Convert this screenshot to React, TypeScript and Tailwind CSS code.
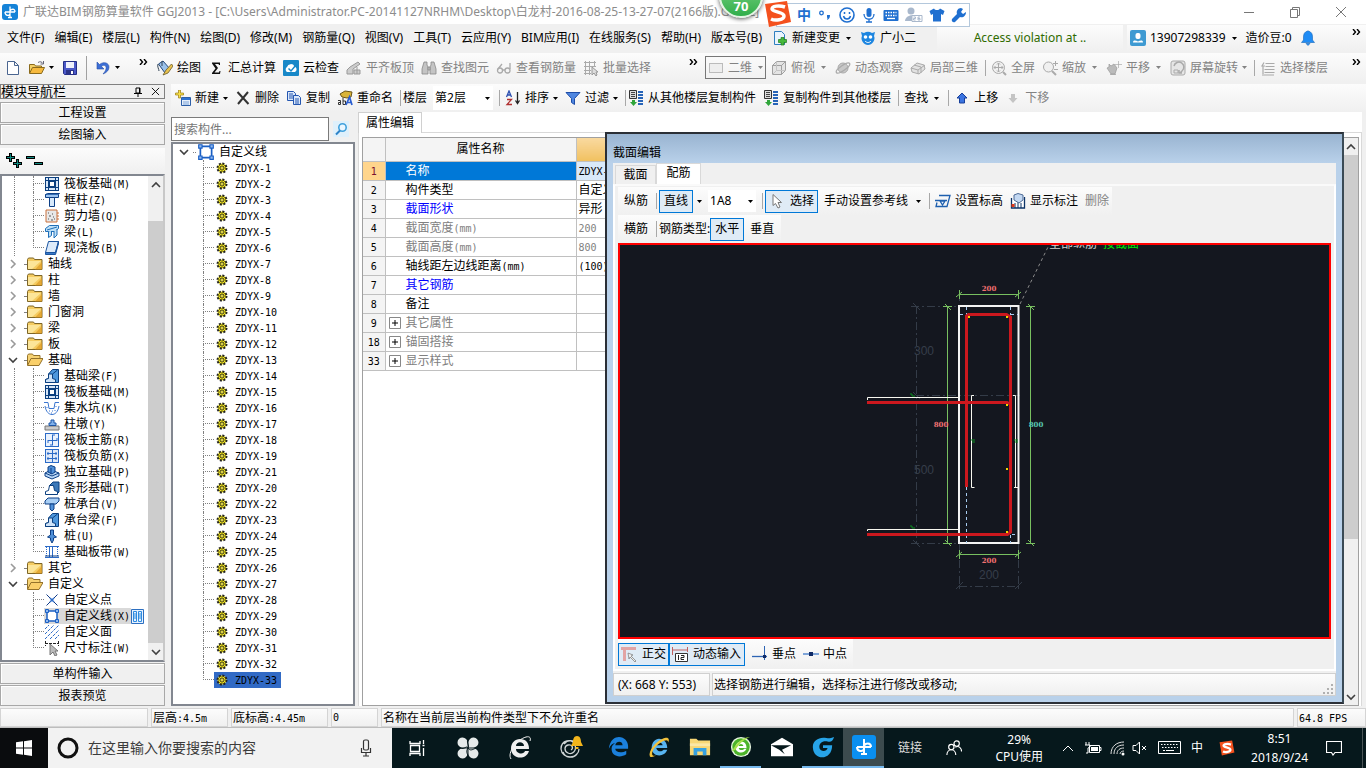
import React from "react";

const UI = "font-['Noto_Sans','Noto_Sans_CJK_SC',sans-serif]";

/* ---------- icons ---------- */

const raft = (
  <g fill="none" stroke="#0b3f7f">
    <rect x="1.5" y="1.5" width="13" height="13" fill="#d7e6f7" />
    <rect x="5.5" y="5.5" width="5" height="5" fill="#fff" />
    <path d="M1 4.5h14M1 11.5h14M4.5 1v14M11.5 1v14" />
  </g>
);
const found = (
  <g stroke="#0b3f7f">
    <path d="M1.5 14.5v-3l3-1V6l4-4.500h6v13z" fill="#4e97dc" />
    <path d="M1.500 14.500v-3l3-1V6h4v4.500l3 1v3z" fill="#cfe3f8" />
    <path d="M8.500 6l5-4" fill="none" />
  </g>
);
const section = (
  <g fill="#fff" stroke="#1a5fc4">
    <path d="M3 3h10v10H3z" strokeWidth="1.500" />
    <path d="M1.500 1.500h3v3h-3zM11.500 1.500h3v3h-3zM1.500 11.500h3v3h-3zM11.500 11.500h3v3h-3z" fill="#8fb8f0" />
  </g>
);

const ICONS: Record<string, React.ReactNode> = {
  raft,
  found,
  section,
  column: (
    <g stroke="#0d3f86">
      <path d="M1.500 2.500h13v3h-13z" fill="#9cc4f0" />
      <path d="M5.500 5.500h5v9h-5z" fill="#d7e9fb" />
      <path d="M1.500 2.500l2-1h12l-1 1" fill="#5c9be0" />
    </g>
  ),
  wall: (
    <g>
      <path d="M2 2h11v12H2z" fill="#e8e8e8" stroke="#c9713c" />
      <path d="M13 5h2M13 8h2M13 11h2" stroke="#c9713c" />
      <path d="M4 5h1M8 6h1M5 8h2M9 9h1M4 11h1M7 12h2M10 11h1" stroke="#555" />
    </g>
  ),
  beam: (
    <g stroke="#1f6fb8" fill="#bfe0f7">
      <path d="M1.500 4.500l4-3h9v3l-4 3h-9z" />
      <path d="M4.500 7.500v6l3-2V7M10 7v7l3-3V5" />
      <path d="M3 6l10-3" />
    </g>
  ),
  slab: (
    <g stroke="#1c55a0">
      <path d="M4.500 1.500h10l-3 11h-10z" fill="#dceafa" />
      <path d="M1.500 12.500v2h10l3-11v-2l-3 11z" fill="#3878c7" />
    </g>
  ),
  pit: (
    <g fill="none" stroke="#3c77d0">
      <path d="M0 2.500h4l1 6h5l1-6h4" />
      <path d="M1 6c1 6 4 8.500 7 8.500S14 12 15 6" />
      <path d="M3 7v1M5 11h1M8 11h1M11 10v1M12 6v1M7 13h1" />
    </g>
  ),
  pier: (
    <g>
      <path d="M1 10h14v4H1z" fill="#ccc" stroke="#777" />
      <path d="M5 9.500V7h2V4h3v3h2v2.500z" fill="#7fb0ea" stroke="#1d55a5" />
    </g>
  ),
  rebar1: (
    <g fill="none" stroke="#2c6bc7">
      <rect x="1.500" y="1.500" width="13" height="13" fill="#eaf2fd" />
      <path d="M8.500 3v10M4 8.500h9M4 8v3M13 6v3M6 13h3M8 3h3" />
    </g>
  ),
  rebar2: (
    <g fill="none" stroke="#2c6bc7">
      <rect x="1.500" y="1.500" width="13" height="13" fill="#dfe9f8" />
      <path d="M8.500 2v12M3 5.500h10M3 10.500h10M4 4v3M12 4v3M4 9v3M12 9v3" />
    </g>
  ),
  isolated: (
    <g stroke="#0d3f86">
      <path d="M1 9l6-3 8 3v3l-7 3-7-3z" fill="#b9d7f6" />
      <path d="M4 8V3l3-1.500 4 1.500v5l-3 2z" fill="#4e8fd8" />
      <path d="M7 10V4M1 9l7 3 7-3" fill="none" />
    </g>
  ),
  strip: (
    <g stroke="#0b3f7f">
      <path d="M5 6l4-4h6v10l-2 2z" fill="#3b78b8" />
      <path d="M1.500 14.500v-3l3-1 1-5h4l1 5 3 1v3z" fill="#fff" />
    </g>
  ),
  cap: (
    <g stroke="#0d3f86">
      <path d="M1 5l3-3h11v3l-3 3H1z" fill="#a9cff5" />
      <path d="M6 8v5l2 2 2-2V8z" fill="#4f90da" />
    </g>
  ),
  pile: (
    <g fill="#4e8fd8" stroke="#0d3f86">
      <path d="M6.500 2h3v5l3 2-3 1v2l-1.500 3-1.500-3v-2l-3-1 3-2z" />
    </g>
  ),
  band: (
    <g fill="none" stroke="#2c6bc7">
      <path d="M1 2.500h14M1 13.500h14M8.500 3v10M5.500 3v10" />
      <path d="M2.500 3v10M13.500 3v10" strokeDasharray="1 1" />
      <path d="M1 12h14" stroke="#0d3f86" />
    </g>
  ),
  point: (
    <g stroke="#2c6bc7" fill="none">
      <path d="M2.500 2.500l4 4M13.500 2.500l-4 4M2.500 13.500l4-4M13.500 13.500l-4-4" stroke="#123c88" />
      <path d="M6 6l4 4M10 6l-4 4" strokeWidth="1.500" />
    </g>
  ),
  hatch: (
    <path d="M1 5l4-4M1 10l9-9M1 15L15 1M6 15l9-9M11 15l4-4" stroke="#2c6bc7" strokeDasharray="3 1" />
  ),
  dim: (
    <g>
      <path d="M1.500 1v5M14.500 1v5M1 3.500h14" stroke="#222" strokeDasharray="3 1" fill="none" />
      <path d="M6 4v11l3-3 2 4 2-1-2-4h3z" fill="#bbb" stroke="#777" />
    </g>
  ),
  gear: (
    <g>
      <circle cx="8" cy="8" r="4.500" fill="#f0e42c" stroke="#222" strokeDasharray="2 1.500" strokeWidth="2" />
      <path d="M8 4v8M4 8h8M5.200 5.200l5.600 5.600M10.800 5.200l-5.600 5.600" stroke="#6b6400" />
      <circle cx="8" cy="8" r="1.500" fill="#fff34a" stroke="#333" strokeWidth=".6" />
    </g>
  ),
  folder: (
    <g>
      <path d="M.5 3.500l1-1.500h5l1 1.500h7.500v10H.5z" fill="#f5cc62" stroke="#7d6527" />
      <path d="M1 5h13L5 13H1z" fill="#fff0b0" opacity=".7" />
      <path d="M15 6v7.500H8z" fill="#dd9a22" opacity=".7" />
    </g>
  ),
  folderOpen: (
    <g stroke="#94722a">
      <path d="M.5 13V3.500l1-1.500h4l1 1.500h6.500V6" fill="#f6d273" />
      <path d="M.5 13.500l3.500-7h12l-4 7z" fill="#f9cf6a" />
    </g>
  ),
  newDoc: (
    <path d="M2.500 1.500h7l4 4v9h-11zM9.500 1.500v4h4" fill="#fff" stroke="#4a6590" />
  ),
  open: (
    <g stroke="#8a6a1c">
      <path d="M.5 13V4.500h5l1 1.500h6v2" fill="#f2cf66" />
      <path d="M.5 13.500l3-6h12l-3 6z" fill="#f6b93e" />
      <path d="M9 2.500c2-1.500 4-.5 5 1M14.500 1v3h-3" stroke="#667" fill="none" />
    </g>
  ),
  save: (
    <g>
      <path d="M1.500 1.500h13v13h-12l-1-1z" fill="#4a58c8" stroke="#242e86" />
      <path d="M4 2h8v6H4z" fill="#eef0fb" />
      <path d="M4 10h8v4H4z" fill="#2b3487" />
      <path d="M9 11h2v3H9z" fill="#fff" />
    </g>
  ),
  undo: (
    <path d="M2 2v7h7L6.500 6.500C9 4 12 6 11 9c-.5 2-2 4-3 5 4-1.500 6-4 6-7 0-4-5-6-9.500-2.500z" fill="#3d6fd6" stroke="#274fa8" strokeWidth=".6" />
  ),
  paint: (
    <g>
      <path d="M1.500 4L6 1l7 8-5 4z" fill="#9cc2ea" stroke="#24477a" />
      <path d="M1 4c-1 3 1 5 1 7M5 6V1" stroke="#345" fill="none" />
      <path d="M14.500 4L9 10l-3 5 5-2 5-7z" fill="#e8c24e" stroke="#6a5a2a" strokeWidth=".8" />
    </g>
  ),
  sigma: <path d="M4 2.500h8V5h-1L10.500 4H7l3 4-3.500 4.500H11l.5-1.500h1l-.5 3H4v-1l3.500-4.500L4 3.500z" fill="#111" />,
  cloud: (
    <g>
      <rect width="16" height="16" rx="1" fill="#1888c8" />
      <path d="M4 12a3 3 0 010-5 4 4 0 017.500-.5A3 3 0 0112 12z" fill="#fff" />
      <path d="M5.500 8.500L8 11l5-6" fill="none" stroke="#1888c8" strokeWidth="1.500" />
    </g>
  ),
  align: (
    <g fill="#ccc" stroke="#999">
      <path d="M1 10l3-3 8-5 2 2-7 5v5H1z" />
      <path d="M8 10h6v4H8zM11 7v7" />
    </g>
  ),
  bino: (
    <g fill="#c4c4c4" stroke="#888" strokeWidth=".8">
      <path d="M3 2h3v3l1 2v7H1V9zM13 2h-3v3L9 7v7h6V9z" />
      <path d="M7 7h2v3H7z" />
    </g>
  ),
  glasses: (
    <g fill="none" stroke="#aaa" strokeWidth="1.300">
      <circle cx="4" cy="10.500" r="2.500" />
      <circle cx="11.500" cy="10.500" r="2.500" />
      <path d="M6.500 10h2.500M2 9l4-5M14 9V3" />
    </g>
  ),
  grid: (
    <g fill="none" stroke="#aaa">
      <path d="M1 2.500h12M1 6.500h12M1 10.500h7M1 13.500h7M2.500 1v14M6.500 1v14M11.500 1v6" />
      <path d="M9 7v8l2-2 2 3 1-1-1-3h2z" fill="#ddd" stroke="#999" />
    </g>
  ),
  rect2d: <rect x="1.500" y="3.500" width="13" height="9" fill="#eee" stroke="#bbb" />,
  cube: (
    <g fill="#e4e4e4" stroke="#a0a0a0">
      <path d="M1.500 5.500h9v9h-9zM1.500 5.500l4-4h9l-4 4zM10.500 14.500l4-4v-9l-4 4z" />
      <path d="M5.500 1.500v9h9M5.500 10.500l-4 4" fill="none" stroke="#c4c4c4" />
    </g>
  ),
  orbit: (
    <g stroke="#aaa" fill="#c8c8c8">
      <circle cx="8" cy="8" r="5" />
      <ellipse cx="8" cy="8" rx="8" ry="2.500" transform="rotate(-35 8 8)" fill="none" strokeWidth="1.300" />
    </g>
  ),
  part3d: (
    <g fill="#e2e2e2" stroke="#aaa">
      <path d="M1 8l6-5 7 2 1 4-6 5-7-2z" />
      <path d="M1 8l7 2 7-5M8 10v4M4 5l7 2v6" fill="none" />
    </g>
  ),
  full: (
    <g fill="none" stroke="#aaa">
      <circle cx="7.500" cy="7.500" r="6" fill="#f0f0f0" />
      <path d="M7.500 3v9M3 7.500h9M6 4.500L7.500 3 9 4.500M6 10.500L7.500 12 9 10.500M4.500 6L3 7.500 4.500 9M10.500 6L12 7.500 10.500 9" />
      <path d="M12 12l3 3" strokeWidth="2" />
    </g>
  ),
  zoom: (
    <g fill="none" stroke="#aaa">
      <circle cx="6.500" cy="7" r="5" fill="#f0f0f0" />
      <path d="M10 11l4 4" strokeWidth="2" />
      <path d="M13.500 1v5M11 3.500h5M12 9.500h4" />
    </g>
  ),
  hand: (
    <g fill="#bbb" stroke="#999" strokeWidth=".7">
      <path d="M1 8l2-1V4l2 2 3-2 3 4-2 6H5z" />
      <path d="M12.500 1v7M9 4.500h7" fill="none" stroke="#aaa" />
      <path d="M4 14.500h6" />
    </g>
  ),
  rotate: (
    <g fill="none" stroke="#aaa">
      <rect x="1" y="1" width="14" height="14" rx="2" fill="#e6e6e6" />
      <path d="M4 6a5 5 0 118 5l-2 2M12 13H9v-3" strokeWidth="1.500" />
      <path d="M4 10h4v3H4z" />
    </g>
  ),
  layers: <path d="M4 2.500L2 6h3M5.500 3.500h9M5.500 6.500h9M4.500 9.500h10M4.500 12.500h10M2 15h12M3 6v8" stroke="#aaa" fill="none" strokeWidth="1.200" />,
  addItem: (
    <g>
      <path d="M6.500 7.500h9v8h-9z" fill="#e8f0fb" stroke="#2d5fa8" />
      <path d="M7 8h8v2H7z" fill="#2d72d2" />
      <path d="M8 12h6M8 14h6" stroke="#7ca4d8" />
      <path d="M3.500 0h2v3h3v2h-3v3h-2V5h-3V3h3z" fill="#f8e04a" stroke="#9a7b10" strokeWidth=".7" />
    </g>
  ),
  cross: <path d="M2.500 2l11 12M13 2L3 14" stroke="#333" strokeWidth="2" fill="none" />,
  copy: (
    <g stroke="#2456b0" fill="#dbe8fb">
      <path d="M1.500 1.500h6l2 2v7h-8zM3 4h4M3 6h5M3 8h5" />
      <path d="M7.500 5.500h5l2 2v7h-7zM9 9h4M9 11h4M9 13h4" />
    </g>
  ),
  rename: (
    <g>
      <path d="M3 4l5-3 7 1-1 5-4 1-5-1z" fill="#d9b43a" stroke="#6b5518" />
      <path d="M1 10.500h2.500v4H1.500v-2H4M6 8v6.500h2.500v-3.500H6" stroke="#333" fill="none" />
      <path d="M9 15l3.500-8L15 15M10 12.500h4" stroke="#2b5ed0" strokeWidth="1.700" fill="none" />
    </g>
  ),
  sort: (
    <g fill="none" strokeWidth="1.300">
      <path d="M1.500 7l2.500-6 2.500 6M2 5h4" stroke="#2b4fb0" />
      <path d="M2 9.500h4.500L2 14.500h5" stroke="#b03030" />
      <path d="M12.500 2v11M10.500 10.500l2 3 2-3" stroke="#222" />
    </g>
  ),
  filter: <path d="M1 2.500h14l-5.500 6v6l-3-2v-4z" fill="#4f86e0" stroke="#1e4da8" />,
  floorCopy: (
    <g>
      <path d="M1.500.5h7v8h-7z" fill="#ddd" stroke="#333" />
      <path d="M3 2.500h4M3 4.500h4M3 6.500h4" stroke="#444" />
      <path d="M10 2h5M10 5h5M10 8h5M10 11h5M10 14h5" stroke="#2764b8" strokeWidth="2" />
      <path d="M4 10h3v2h2l-3.500 4L2 12h2z" fill="#2fa53a" />
    </g>
  ),
  up: <path d="M8 3l5 5h-2.500v5h-5V8H3z" fill="#3b74e0" stroke="#173f9a" />,
  down: <path d="M8 13l4.500-5H10V4H6v4H3.500z" fill="#c4c4c4" />,
  change: (
    <g>
      <path d="M2.500 1.500h7l3 3v10h-10z" fill="#eaf4fd" stroke="#2f7fc0" />
      <path d="M9 7.500h3v2h2.500v3H12V15H9v-2.500H6.500v-3H9z" fill="#46b83a" stroke="#1e7a1c" strokeWidth=".7" />
    </g>
  ),
  owl: (
    <g>
      <path d="M1 2l3 1a8 8 0 018 0l3-1-1 4c2 4-2 9-6 9S0 10 2 6z" fill="#1e86e0" />
      <circle cx="5.500" cy="7" r="1.800" fill="#fff" />
      <circle cx="10.500" cy="7" r="1.800" fill="#fff" />
      <path d="M5 11c2 2 4 2 6 0" stroke="#fff" fill="none" />
    </g>
  ),
  user: (
    <g>
      <rect width="16" height="16" rx="2" fill="#3e9ad2" />
      <rect x="5.500" y="3" width="5" height="6" rx="2" fill="#fff" />
      <path d="M3 12.500c0-3 3-2 5-1 2-1 5-2 5 1z" fill="#fff" />
    </g>
  ),
  bell: <path d="M7.500 1h1c3 1 4 3 4 6v3l2 2.500h-13l2-2.500V7c0-3 1-5 4-6zM6 13.500h4L8 15.500z" fill="#1f8cf5" stroke="#1464b8" strokeWidth=".6" />,
  elev: (
    <g fill="#e6f1fc" stroke="#1e5fae" strokeWidth="1.300">
      <path d="M4 2.500h11l-3 11H1l1-4" fill="none" />
      <path d="M0 7.500h12M5 8l2.500 4L10 8z" />
    </g>
  ),
  showDim: (
    <g>
      <path d="M1.500 5v10h13V4" fill="#fff" stroke="#0d3468" strokeWidth="1.300" />
      <path d="M5 15v-5M8 15V8M11 15v-5" stroke="#0d3468" />
      <path d="M4 2l4-1.500L13 2v5l-4 3-5-3z" fill="#c3d8f2" stroke="#4c6a96" />
      <path d="M1.500 11h3v3h-3z" fill="#e03a1a" />
    </g>
  ),
  cursor: <path d="M4 1.500v11l2.500-2 2.500 4.500 2-1-2-4.500h3.500z" fill="#fff" stroke="#777" />,
  ortho: (
    <g>
      <path d="M0 1h15v3H5v11H2V4H0z" fill="#e2a4a4" />
      <path d="M7 7l5 2-2 1 5 5-1 1-5-5-1 2z" fill="#eee" stroke="#777" strokeWidth=".7" />
    </g>
  ),
  dyn: (
    <g>
      <path d="M.5 1v8M15.500 1v5M0 4h16" stroke="#c06060" fill="none" />
      <path d="M3.500 7.500h12v8h-12z" fill="#fff" stroke="#333" />
      <path d="M6.500 9v5M9 9.500h3v2H9v2h3" stroke="#222" fill="none" />
    </g>
  ),
  perp: (
    <g>
      <path d="M0 10.500h15" stroke="#2d64b4" strokeWidth="1.300" />
      <path d="M12.500 0v14" stroke="#2d64b4" />
      <path d="M11 9h3v3h-3z" fill="#102a66" />
    </g>
  ),
  mid: (
    <g>
      <path d="M0 8h16" stroke="#3d78c8" strokeWidth="1.300" />
      <path d="M6 6h4v4H6z" fill="#102a66" />
    </g>
  ),
};

function Icon({ n, big }: { n: string; big?: boolean }) {
  return (
    <svg viewBox="0 0 16 16" className={big ? "h-[18px] w-[18px] shrink-0" : "h-4 w-4 shrink-0"} aria-hidden="true">
      {ICONS[n]}
    </svg>
  );
}

function Caret() {
  return (
    <svg viewBox="0 0 5 3" className="h-[3px] w-[5px] shrink-0" aria-hidden="true">
      <path d="M0 0h5L2.500 3z" fill="currentColor" />
    </svg>
  );
}

function More() {
  return (
    <svg viewBox="0 0 8 6" className="h-[6px] w-[9px] shrink-0" aria-hidden="true">
      <path d="M.5 0L3 3 .5 6M4.500 0L7 3 4.500 6" stroke="#000" strokeWidth="1.400" fill="none" />
    </svg>
  );
}

type TbProps = { icon?: string; label?: string; caret?: "near" | "wide"; off?: boolean };
function Tb({ icon, label, caret, off }: TbProps) {
  return (
    <button
      aria-label={label ? undefined : icon}
      className={"mr-[7px] flex h-full shrink-0 items-center gap-1 whitespace-nowrap " + (off ? "text-[#838383]" : "text-black")}
    >
      {icon && <Icon n={icon} />}
      {label}
      {caret && (
        <span className={caret === "wide" ? "flex w-[9px] justify-center" : "flex w-[5px] justify-center"}>
          <Caret />
        </span>
      )}
    </button>
  );
}

function Sep({ tight }: { tight?: boolean }) {
  return <span className={"h-4 w-px shrink-0 bg-[#a8a8a8] " + (tight ? "mr-[2px]" : "mr-[5px]")} />;
}

/* Bitmap-style labels: half-width Latin beside full-width Chinese glyphs. */
function Cell({ t }: { t: string }) {
  return (
    <>
      {t.split(/([\x20-\x7e]+)/).map((s, i) =>
        i % 2 ? (
          <span key={i} className="font-['DejaVu_Sans_Mono',monospace] text-[10px]">
            {s}
          </span>
        ) : (
          s
        ),
      )}
    </>
  );
}

/* ---------- header ---------- */

const MENUS = ["文件(F)", "编辑(E)", "楼层(L)", "构件(N)", "绘图(D)", "修改(M)", "钢筋量(Q)", "视图(V)", "工具(T)", "云应用(Y)", "BIM应用(I)", "在线服务(S)", "帮助(H)", "版本号(B)"];
const STRIP = "bg-linear-to-b from-[#fcfcfc] to-[#f0f0f0]";

function TitleBar() {
  return (
    <header className="flex h-6 shrink-0 items-center bg-white">
      <svg viewBox="0 0 16 16" className="ml-[2px] h-4 w-4 shrink-0">
        <rect width="16" height="16" rx="3" fill="#1583d8" />
        <path d="M8 2.500v11M3 8h10M3 8c0 4 4 4 5 2M13 8c0-4-4-3-5-1M6 13.500h4" stroke="#fff" fill="none" strokeWidth="1.300" />
      </svg>
      <h1 className="ml-[5px] whitespace-nowrap text-[#8c8c8c]">
        广联达BIM钢筋算量软件 GGJ2013 - [C:\Users\Administrator.PC-20141127NRHM\Desktop\白龙村-2016-08-25-13-27-07(2166版).GGJ12]
      </h1>
      <div className="mr-[19px] ml-auto flex items-center gap-[34px] text-[#777]">
        <button aria-label="最小化"><svg viewBox="0 0 12 12" className="h-3 w-3"><path d="M1 6.500h10" stroke="currentColor" /></svg></button>
        <button aria-label="还原"><svg viewBox="0 0 12 12" className="h-3 w-3"><path d="M1.500 3.500h7v8h-7zM3.500 3.500v-2h7v8h-2" stroke="currentColor" fill="none" /></svg></button>
        <button aria-label="关闭"><svg viewBox="0 0 12 12" className="h-3 w-3"><path d="M1 1l10 10M11 1L1 11" stroke="currentColor" /></svg></button>
      </div>
    </header>
  );
}

function MenuBar() {
  return (
    <div className="flex h-7 shrink-0 items-center">
      <nav className="flex h-full w-[937px] shrink-0 items-center gap-[10px] pl-[7px]">
        {MENUS.map((m) => (
          <button key={m} className="whitespace-nowrap">{m}</button>
        ))}
        <div className="flex h-full items-center">
          <Tb icon="change" label="新建变更" caret="wide" />
          <Tb icon="owl" label="广小二" />
        </div>
      </nav>
      <div className={"mr-1 flex h-[26px] w-[186px] shrink-0 items-center justify-center text-[#2f6b00] " + STRIP}>
        <span>Access violation at ..</span>
      </div>
      <div className={"flex h-[26px] flex-1 items-center pl-[3px] " + STRIP}>
        <Tb icon="user" label="13907298339" caret="wide" />
        <span className="mr-2 whitespace-nowrap">造价豆:0</span>
        <Tb icon="bell" />
        <span className="mr-[5px] mb-3 ml-auto"><More /></span>
      </div>
    </div>
  );
}

function MainToolbar() {
  return (
    <div className="mt-px flex h-[29px] shrink-0 items-center">
      <div className={"flex h-full w-[153px] shrink-0 items-center gap-2 pl-[5px] " + STRIP}>
        <Icon n="newDoc" />
        <span className="flex items-center gap-1"><Icon n="open" /><Caret /></span>
        <Icon n="save" />
        <span className="h-6 w-px bg-[#a0a0a0]" />
        <span className="flex items-center gap-1"><Icon n="undo" /><Caret /></span>
        <span className="mr-[5px] mb-3 ml-auto"><More /></span>
      </div>
      <div className={"flex h-full w-[549px] shrink-0 items-center pl-1 " + STRIP}>
        <Tb icon="paint" label="绘图" />
        <Tb icon="sigma" label="汇总计算" />
        <Tb icon="cloud" label="云检查" />
        <Tb icon="align" label="平齐板顶" off />
        <Tb icon="bino" label="查找图元" off />
        <Tb icon="glasses" label="查看钢筋量" off />
        <Tb icon="grid" label="批量选择" off />
        <span className="mr-1 mb-3 ml-auto"><More /></span>
      </div>
      <div className={"flex h-full flex-1 items-center pl-[3px] " + STRIP}>
        <button className="mr-[5px] flex h-[23px] w-[61px] shrink-0 items-center gap-1 border border-[#777] pl-[2px] text-[#838383]">
          <Icon n="rect2d" />
          <span className="whitespace-nowrap">二维</span>
          <span className="ml-[2px]"><Caret /></span>
        </button>
        <Tb icon="cube" label="俯视" caret="wide" off />
        <Tb icon="orbit" label="动态观察" off />
        <Tb icon="part3d" label="局部三维" off />
        <Sep />
        <Tb icon="full" label="全屏" off />
        <Tb icon="zoom" label="缩放" caret="wide" off />
        <Tb icon="hand" label="平移" caret="wide" off />
        <Tb icon="rotate" label="屏幕旋转" caret="near" off />
        <Sep />
        <Tb icon="layers" label="选择楼层" off />
        <span className="mr-[5px] mb-3 ml-auto"><More /></span>
      </div>
    </div>
  );
}

function ComponentToolbar() {
  return (
    <div className={"flex h-7 shrink-0 items-center pl-1 " + STRIP}>
      <Tb icon="addItem" label="新建" caret="near" />
      <Tb icon="cross" label="删除" />
      <Tb icon="copy" label="复制" />
      <Tb icon="rename" label="重命名" />
      <Sep tight />
      <label htmlFor="floor" className="mr-[6px] shrink-0">楼层</label>
      <span className="mr-[6px] flex h-6 w-[60px] shrink-0 items-center bg-white">
        <select id="floor" className="w-[52px] appearance-none bg-white pl-[2px] outline-none">
          <option>第2层</option>
        </select>
        <Caret />
      </span>
      <Sep />
      <Tb icon="sort" label="排序" caret="near" />
      <Tb icon="filter" label="过滤" caret="near" />
      <Sep tight />
      <Tb icon="floorCopy" label="从其他楼层复制构件" />
      <Tb icon="floorCopy" label="复制构件到其他楼层" />
      <Sep />
      <Tb label="查找" caret="wide" />
      <Sep />
      <Tb icon="up" label="上移" />
      <Tb icon="down" label="下移" off />
    </div>
  );
}

/* ---------- module navigation ---------- */

type Node = { t: string; icon?: string; open?: boolean; leaf?: boolean; last?: boolean; rail?: boolean; sel?: boolean };
const leaf = (t: string, icon: string, o: Partial<Node> = {}): Node => ({ t, icon, leaf: true, rail: true, ...o });
const NAV: Node[] = [
  leaf("筏板基础(M)", "raft"),
  leaf("框柱(Z)", "column"),
  leaf("剪力墙(Q)", "wall"),
  leaf("梁(L)", "beam"),
  leaf("现浇板(B)", "slab", { last: true }),
  { t: "轴线" },
  { t: "柱" },
  { t: "墙" },
  { t: "门窗洞" },
  { t: "梁" },
  { t: "板" },
  { t: "基础", open: true },
  leaf("基础梁(F)", "found"),
  leaf("筏板基础(M)", "raft"),
  leaf("集水坑(K)", "pit"),
  leaf("柱墩(Y)", "pier"),
  leaf("筏板主筋(R)", "rebar1"),
  leaf("筏板负筋(X)", "rebar2"),
  leaf("独立基础(P)", "isolated"),
  leaf("条形基础(T)", "strip"),
  leaf("桩承台(V)", "cap"),
  leaf("承台梁(F)", "found"),
  leaf("桩(U)", "pile"),
  leaf("基础板带(W)", "band", { last: true }),
  { t: "其它" },
  { t: "自定义", open: true },
  leaf("自定义点", "point", { rail: false }),
  leaf("自定义线(X)", "section", { rail: false, sel: true }),
  leaf("自定义面", "hatch", { rail: false }),
  leaf("尺寸标注(W)", "dim", { rail: false, last: true }),
];

function Chevron({ dir, dark }: { dir: "right" | "down" | "up"; dark?: boolean }) {
  const d = { right: "M3 1l4 4-4 4", down: "M1 3l4 4 4-4", up: "M1 7l4-4 4 4" }[dir];
  return (
    <svg viewBox="0 0 10 10" className="h-[10px] w-[10px] shrink-0" aria-hidden="true">
      <path d={d} stroke={dark ? "#404040" : "#9a9a9a"} strokeWidth="1.600" fill="none" />
    </svg>
  );
}

function Branch({ last }: { last?: boolean }) {
  return (
    <span className="flex h-4 w-[11px] shrink-0 flex-col">
      <span className="h-2 border-b border-l border-dotted border-[#808080]" />
      {!last && <span className="h-2 border-l border-dotted border-[#808080]" />}
    </span>
  );
}

function NavRow({ n }: { n: Node }) {
  if (!n.leaf)
    return (
      <li className="flex h-4 items-center whitespace-nowrap pl-[6px]">
        <Chevron dir={n.open ? "down" : "right"} dark={n.open} />
        <span className="mr-px ml-[6px] w-[2px] border-t border-dotted border-[#808080]" />
        <Icon n={n.open ? "folderOpen" : "folder"} />
        <span className="ml-[5px]"><Cell t={n.t} /></span>
      </li>
    );
  return (
    <li className="flex h-4 items-center whitespace-nowrap">
      <span className={"ml-3 h-4 w-[19px] shrink-0 " + (n.rail ? "border-l border-dotted border-[#808080]" : "")} />
      <Branch last={n.last} />
      <span className={"flex h-4 items-center gap-[4px] " + (n.sel ? "bg-[#d9d9d9] pr-px" : "")}>
        <Icon n={n.icon ?? "raft"} />
        <span><Cell t={n.t} /></span>
      </span>
      {n.sel && (
        <svg viewBox="0 0 13 15" className="h-[15px] w-[13px] shrink-0">
          <path d="M.5.500h12v14H.5z" fill="#e6f2ff" stroke="#2d6fc0" />
          <path d="M2.500 2.500h3v10h-3zM7.500 2.500h3v10h-3zM3 5h2M3 7h2M3 9h2M8 5h2M8 7h2M8 9h2" fill="none" stroke="#2d8be0" />
        </svg>
      )}
    </li>
  );
}

function BarButton({ t }: { t: string }) {
  return (
    <button className="h-[21px] w-full shrink-0 border border-[#a8a8a8] bg-[#f0f0f0] leading-none shadow-[inset_1px_1px_0_#fff]">{t}</button>
  );
}

function NavPanel() {
  return (
    <aside className="flex w-[165px] shrink-0 flex-col">
      <div className="mb-[3px] flex h-[15px] shrink-0 items-center border border-[#808080]">
        <h2 className="text-[13px] leading-none">模块导航栏</h2>
        <svg viewBox="0 0 10 10" className="ml-auto h-[10px] w-[10px]"><path d="M3 1h4v5H3zM1 6.500h8M5 7v3M6.500 1v5" stroke="#000" fill="none" /></svg>
        <svg viewBox="0 0 10 10" className="mr-1 ml-2 h-[9px] w-[9px]"><path d="M1 1l8 8M9 1L1 9" stroke="#000" fill="none" /></svg>
      </div>
      <div className="flex min-h-0 flex-1 flex-col gap-px">
        <BarButton t="工程设置" />
        <BarButton t="绘图输入" />
        <div className={"mt-[2px] flex h-[25px] shrink-0 items-center gap-1 pl-[6px] " + STRIP}>
          <svg viewBox="0 0 16 16" className="h-4 w-4"><path d="M4.500 0v9M0 4.500h9M11.500 6v9M7 10.500h9" stroke="#000" strokeWidth="3" /><path d="M4.500 1v7M1 4.500h7M11.500 7v7M8 10.500h7" stroke="#0f8a80" /></svg>
          <svg viewBox="0 0 18 16" className="h-4 w-[18px]"><path d="M0 4.500h9M8 10.500h9" stroke="#000" strokeWidth="3" /><path d="M1 4.500h7M9 10.500h7" stroke="#0f8a80" /></svg>
        </div>
        <div className="flex min-h-0 flex-1 overflow-hidden border-2 border-[#828790] border-r-[#c8c8c8] bg-white">
          <ul className="min-w-0 flex-1">
            {NAV.map((n, i) => (
              <NavRow key={i} n={n} />
            ))}
          </ul>
          <div className="flex w-[15px] shrink-0 flex-col items-center bg-[#f0f0f0]">
            <span className="flex h-[17px] items-center"><Chevron dir="up" dark /></span>
            <span className="mt-7 w-full flex-1 bg-[#cdcdcd]" />
            <span className="flex h-[17px] items-center"><Chevron dir="down" dark /></span>
          </div>
        </div>
        <BarButton t="单构件输入" />
        <BarButton t="报表预览" />
      </div>
    </aside>
  );
}

/* ---------- component list ---------- */

const NUMS = [1, 2, 3, 4, 5, 6, 7, 8, 9, 10, 11, 12, 13, 14, 15, 16, 17, 18, 19, 21, 20, 22, 23, 24, 25, 26, 27, 28, 29, 30, 31, 32, 33];

function ComponentList() {
  return (
    <section className="flex w-[184px] shrink-0 flex-col pt-[4px]">
      <div className="flex h-[26px] shrink-0 items-center">
        <input aria-label="搜索构件" placeholder="搜索构件..." className="h-6 w-[158px] border border-[#7a7a7a] bg-white pl-[2px] text-xs text-[#777] outline-none placeholder:text-[#777]" />
        <button aria-label="搜索" className="ml-[4px] flex h-4 w-4 items-center justify-center bg-[#dff0fb]">
          <svg viewBox="0 0 14 14" className="h-[14px] w-[14px]"><circle cx="8.500" cy="5.500" r="3.700" fill="#eaf6ff" stroke="#3fa0dc" strokeWidth="1.600" /><path d="M6 8.500L2 12.500" stroke="#2d83c8" strokeWidth="2" /></svg>
        </button>
      </div>
      <div className="min-h-0 flex-1 overflow-hidden border-2 border-[#828790] bg-white">
        <div className="flex h-4 items-center pl-[6px]">
          <Chevron dir="down" dark />
          <span className="mr-px ml-[4px] w-[3px] border-t border-dotted border-[#808080]" />
          <Icon n="section" big />
          <span className="ml-1">自定义线</span>
        </div>
        <ul>
          {NUMS.map((n, i) => (
            <li key={n} className="flex h-4 items-center">
              <span className="ml-[30px]"><Branch last={i === NUMS.length - 1} /></span>
              <span className={"flex h-4 items-center pr-1 " + (n === 33 ? "bg-[#316ac5]" : "")}>
                <Icon n="gear" />
                <span className="ml-[5px]"><Cell t={"ZDYX-" + n} /></span>
              </span>
            </li>
          ))}
        </ul>
      </div>
    </section>
  );
}

/* ---------- properties ---------- */

type Row = { n: number; name: string; v?: string; tone?: string; group?: boolean; vt?: string };
const ROWS: Row[] = [
  { n: 1, name: "名称", v: "ZDYX-33" },
  { n: 2, name: "构件类型", v: "自定义线" },
  { n: 3, name: "截面形状", v: "异形", tone: "text-[#0000ff]" },
  { n: 4, name: "截面宽度(mm)", v: "200", tone: "text-[#808080]", vt: "text-[#808080]" },
  { n: 5, name: "截面高度(mm)", v: "800", tone: "text-[#808080]", vt: "text-[#808080]" },
  { n: 6, name: "轴线距左边线距离(mm)", v: "(100)" },
  { n: 7, name: "其它钢筋", tone: "text-[#0000ff]" },
  { n: 8, name: "备注" },
  { n: 9, name: "其它属性", tone: "text-[#808080]", group: true },
  { n: 18, name: "锚固搭接", tone: "text-[#808080]", group: true },
  { n: 33, name: "显示样式", tone: "text-[#808080]", group: true },
];

function PropertyPanel() {
  return (
    <section className="mr-1 ml-[3px] flex min-w-0 flex-1 flex-col">
      <div className="flex h-[21px] shrink-0 bg-white">
        <h2 className="flex w-[64px] items-center justify-center border-t border-r border-l border-[#d0d0d0] bg-white leading-none">属性编辑</h2>
        <span className="flex-1 border-b border-[#d9d9d9]" />
      </div>
      <div className="flex min-h-0 flex-1 border-r border-l border-[#d9d9d9] bg-white pt-1 pr-[2px] pl-[3px]">
        <div className="flex min-w-0 flex-1 border border-[#a0a0a0] bg-white">
          <table className="h-min w-full table-fixed border-collapse">
            <thead>
              <tr className="h-[23px]">
                <th className="w-[22px] border border-t-0 border-l-0 border-[#c0c0c0] bg-[#f4f4f4]" />
                <th className="w-[191px] border border-t-0 border-[#c0c0c0] bg-[#f4f4f4] p-0 leading-none font-normal">属性名称</th>
                <th className="border border-t-0 border-[#c0c0c0] bg-linear-to-b from-[#f9d99f] to-[#f1c15f] p-0 font-normal">属性值</th>
              </tr>
            </thead>
            <tbody>
              {ROWS.map((r) => (
                <tr key={r.n} className="h-[19px]">
                  <td className={"border border-l-0 border-[#c0c0c0] p-0 text-center leading-none " + (r.n === 1 ? "bg-[#ffd58c] text-[#7a1030]" : "bg-[#f4f4f4]")}>
                    <Cell t={String(r.n)} />
                  </td>
                  <td className={"border border-[#c0c0c0] p-0 leading-none " + (r.n === 1 ? "bg-[#0078d7] text-white" : r.tone ?? "")}>
                    <span className="flex items-center whitespace-nowrap">
                      <span className="flex w-5 shrink-0 pl-[3px]">
                        {r.group && (
                          <svg viewBox="0 0 12 12" className="h-3 w-3"><path d="M.5.500h11v11H.5z" fill="#fff" stroke="#888" /><path d="M3 6h6M6 3v6" stroke="#000" /></svg>
                        )}
                      </span>
                      <span><Cell t={r.name} /></span>
                    </span>
                  </td>
                  <td className={"border border-[#c0c0c0] py-0 pr-0 pl-[2px] leading-none " + (r.n === 1 ? "bg-[#d9e9f9]" : r.vt ?? "")}>
                    <Cell t={r.v ?? ""} />
                  </td>
                </tr>
              ))}
            </tbody>
          </table>
          <div className="flex w-[14px] shrink-0 flex-col items-center bg-[#f0f0f0]">
            <span className="flex h-[17px] items-center"><Chevron dir="up" dark /></span>
            <span className="h-[384px] w-full bg-[#cdcdcd]" />
            <span className="mt-auto flex h-[17px] items-center"><Chevron dir="down" dark /></span>
          </div>
        </div>
      </div>
    </section>
  );
}

/* ---------- section editor window ---------- */

function Drawing() {
  const dots: [number, number][] = [[968, 317], [1006, 317], [1006, 405], [1006, 469], [1006, 532]];
  return (
    <svg className="block h-full w-full" role="img" aria-label="截面配筋图">
      <g transform="translate(-620 -246)" fill="none">
        <path d="M1020 305L1049 246" stroke="#8a8a8a" strokeDasharray="3 3" />
        <g className="text-[12px]" fontSize="12">
          <text x="1049" y="249" fill="#d0d0d0">全部纵筋</text>
          <text x="1103" y="249" fill="#00e800">按截面</text>
        </g>
        <g stroke="#343c48" strokeDasharray="8 3 2 3">
          <path d="M916.500 307v237M911 307.500h48M916 396.500h106M911 544.500h48M959.500 545v46M1018.500 545v46M959 587.500h60M959.500 302v-2" />
        </g>
        <g stroke="#343c48">
          <path d="M913 304l7 7M913 393l7 7M913 541l7 7M956 590l7-7M1015 590l7-7" />
        </g>
        <g fill="#363e4a" fontSize="12" textAnchor="middle" fontFamily="Liberation Sans">
          <text x="924" y="356">300</text>
          <text x="924" y="475">500</text>
          <text x="989" y="580">200</text>
        </g>
        <g stroke="#78c060">
          <path d="M959 295.500h60M959.500 291v9M1018.500 291v9M956 298l6-5M1015 298l6-5" />
          <path d="M959 555.500h60M959.500 551v9M1018.500 551v9M956 558l6-5M1015 558l6-5" />
          <path d="M947.500 307v237M943 307.500h9M943 544.500h9M945 305l6 6M945 541l6 6" />
          <path d="M1030.500 307v237M1026 307.500h9M1026 544.500h9M1028 305l6 6M1028 541l6 6" />
        </g>
        <path d="M959 307h59.500v237H959z" stroke="#f4f4f4" strokeWidth="2" />
        <g stroke="#a8ccf0" strokeDasharray="3 3">
          <path d="M966.500 308v8M966.500 488v56M1010.500 308v8M1010.500 536v8M960 315.500h6M1011 315.500h7M1012 535.500h6" />
        </g>
        <g stroke="#f8f8f0">
          <path d="M867.500 401v-2.500H959M867.500 532v-1.500H959M974 396.500h-2.500v92h3M1013 396.500h2.500v92M1014 488.500h4" />
        </g>
        <g stroke="#cc181e" strokeWidth="3">
          <path d="M966.500 488V317l2-1.500h38l4 2.500V533l-3 2.500H867M1010 405l-3-1.500H867" />
        </g>
        <g fill="#f0d800">
          {dots.map(([x, y]) => (
            <rect key={x + "-" + y} x={x} y={y} width="2" height="2" />
          ))}
        </g>
        <path d="M910 395h2v2h3M910 527h2v2h3M971 441h4M972 443h3M1014 441h4M1015 443h3" stroke="#0b8f20" />
        <g fontSize="7" fontWeight="bold" textAnchor="middle" fontFamily="DejaVu Serif">
          <text x="989" y="292" fill="#f07070">200</text>
          <text x="989" y="564" fill="#f07070">200</text>
          <text x="941" y="428" fill="#f07070">800</text>
          <text x="1036" y="428" fill="#58c8b0">800</text>
        </g>
      </g>
    </svg>
  );
}

const PRESSED = "flex shrink-0 items-center gap-[5px] whitespace-nowrap border border-[#0078d7] bg-[#dfebf6]";

function SectionEditor() {
  return (
    <section className="absolute top-[132px] right-[22px] bottom-[64px] left-[605px] flex flex-col border-2 border-[#2b2f36] border-r-[#3a4a55] bg-[#b9d1ea] px-[6px] pb-[6px]">
      <h2 className="-mx-[6px] flex h-[29px] shrink-0 items-center bg-linear-to-b from-[#99b4d1] to-[#b9d1ea] px-[6px] pt-2 leading-none">截面编辑</h2>
      <div className="flex min-h-0 flex-1 flex-col bg-[#f0f0f0]">
        <div className="flex h-[21px] shrink-0 items-end pl-[2px]">
          <button className="h-[19px] w-[41px] border border-b-0 border-[#d9d9d9] leading-none">截面</button>
          <button className="h-[21px] w-[45px] border border-b-0 border-[#d9d9d9] bg-white pb-[2px] leading-none">配筋</button>
        </div>
        <div className="flex min-h-0 flex-1 flex-col border-2 border-white border-t-[#fafafa] px-[3px] pt-px">
          <div className={"flex h-7 w-[494px] shrink-0 items-center pl-[6px] " + STRIP}>
            <span className="mr-2 shrink-0">纵筋</span>
            <Sep tight />
            <button className={PRESSED + " mr-1 h-[23px] px-1"}>直线</button>
            <span className="mr-[6px]"><Caret /></span>
            <span className="mr-[6px] flex h-[22px] w-[48px] shrink-0 items-center bg-white">
              <select aria-label="钢筋" className="w-[40px] appearance-none bg-white pl-[2px] outline-none">
                <option>1A8</option>
              </select>
              <Caret />
            </span>
            <Sep tight />
            <button className={PRESSED + " mr-[6px] h-[23px] px-[3px]"}><Icon n="cursor" />选择</button>
            <span className="mr-2 shrink-0">手动设置参考线</span>
            <span className="mr-2"><Caret /></span>
            <Sep />
            <Tb icon="elev" label="设置标高" />
            <Tb icon="showDim" label="显示标注" />
            <Tb label="删除" off />
          </div>
          <div className={"flex h-7 w-[163px] shrink-0 items-center pl-[6px] " + STRIP}>
            <span className="mr-2 shrink-0">横筋</span>
            <Sep tight />
            <span className="shrink-0">钢筋类型:</span>
            <button className={PRESSED + " mr-[6px] h-[23px] px-1"}>水平</button>
            <button className="shrink-0">垂直</button>
          </div>
          <div className="min-h-0 flex-1 overflow-hidden border-2 border-[#ff0000] bg-[#14171f]">
            <Drawing />
          </div>
          <div className={"flex h-[30px] w-[235px] shrink-0 items-center " + STRIP}>
            <button className={PRESSED + " h-[23px] w-[51px] pl-[2px]"}><Icon n="ortho" />正交</button>
            <button className={PRESSED + " mr-[7px] h-[23px] w-[76px] pl-[2px]"}><Icon n="dyn" />动态输入</button>
            <Tb icon="perp" label="垂点" />
            <Tb icon="mid" label="中点" />
          </div>
        </div>
        <div className="flex h-[25px] shrink-0 items-stretch gap-[2px] pt-[2px]">
          <span className={"flex w-[97px] items-center border border-[#d0d0d0] pl-1 leading-none " + STRIP}>(X: 668 Y: 553)</span>
          <span className={"flex flex-1 items-center border border-[#d0d0d0] pl-px leading-none " + STRIP}>
            选择钢筋进行编辑，选择标注进行修改或移动;
            <svg viewBox="0 0 12 12" className="mt-2 mr-px ml-auto h-3 w-3"><path d="M9 1h2v2H9zM9 5h2v2H9zM9 9h2v2H9zM5 5h2v2H5zM5 9h2v2H5zM1 9h2v2H1z" fill="#b0b0b0" /></svg>
          </span>
        </div>
      </div>
    </section>
  );
}

/* ---------- floating input bar ---------- */

function ImeBar() {
  return (
    <>
      <div className="absolute top-[-26px] left-[719px] flex h-11 w-11 items-end justify-center rounded-full border-2 border-[#e4f4e4] bg-linear-to-b from-[#7fd88a] to-[#2fae4a] pb-[3px] text-[13px] leading-none font-bold text-white shadow-[0_1px_4px_#555]">
        70
      </div>
      <div className="absolute top-[3px] left-[776px] flex h-[24px] w-[194px] items-center gap-[6px] border border-[#b4c8dc] bg-white pl-5 text-[#1f6fd0]">
        <span className="text-[14px] leading-none font-bold">中</span>
        <svg viewBox="0 0 16 16" className="h-4 w-4"><circle cx="4.500" cy="6" r="1.800" fill="none" stroke="currentColor" strokeWidth="1.300" /><path d="M10 8h3c0 3-1 4-3 5 1-2 0-2 0-3z" fill="currentColor" /></svg>
        <svg viewBox="0 0 16 16" className="h-4 w-4"><circle cx="8" cy="8" r="7" fill="none" stroke="currentColor" strokeWidth="1.600" /><path d="M4.500 9c1 4 6 4 7 0M5.500 5v2M10.500 5v2" fill="none" stroke="currentColor" strokeWidth="1.500" /></svg>
        <svg viewBox="0 0 16 16" className="h-4 w-4"><rect x="5.500" y="1" width="5" height="9" rx="2.500" fill="currentColor" /><path d="M3 7c0 7 10 7 10 0M8 12v3M5 15h6" fill="none" stroke="currentColor" strokeWidth="1.300" /></svg>
        <svg viewBox="0 0 16 16" className="h-4 w-4"><rect x=".500" y="3" width="15" height="11" rx="1" fill="currentColor" /><path d="M2.500 5.500h11M2.500 8.500h11" stroke="#fff" strokeDasharray="1.500 1" strokeWidth="1.500" /><path d="M4 11.500h8" stroke="#fff" strokeWidth="1.300" /></svg>
        <svg viewBox="0 0 18 16" className="h-4 w-[18px] text-[#a9b8cc]"><circle cx="6" cy="4" r="3.500" fill="currentColor" /><path d="M0 14c0-6 10-8 11-3v3z" fill="currentColor" /><path d="M7 8.500h10v6H7z" fill="#fff" stroke="currentColor" /><path d="M8.500 10h2v1.500h-2V13h2M15 10h-2v3h2v-1.500h-2" fill="none" stroke="currentColor" /></svg>
        <svg viewBox="0 0 16 16" className="h-4 w-4"><path d="M5 1.500c1 2 5 2 6 0l4.500 2.500-1.500 4-2-1v7.500H4V7L2 8 .5 4z" fill="currentColor" /></svg>
        <svg viewBox="0 0 16 16" className="h-4 w-4"><path d="M10 1c-3 0-5 3-4 6l-5 5c-1 2 1 4 3 3l5-5c3 1 6-1 6-5l-3 2-2-2 2-3z" fill="currentColor" /></svg>
      </div>
      <svg viewBox="0 0 28 28" className="absolute top-0 left-[764px] h-7 w-7">
        <path d="M1 4L23 1l4 21-22 5z" fill="#f4511e" />
        <path d="M21 7c-6-2-13-1-13 2s12 3 12 7-9 5-13 3" stroke="#fff" strokeWidth="3.500" fill="none" />
      </svg>
    </>
  );
}

/* ---------- status bar and taskbar ---------- */

function StatusBar() {
  const cell = "flex h-full shrink-0 items-center whitespace-nowrap border border-[#d4d4d4] pl-px leading-none " + STRIP;
  return (
    <div className="flex h-5 shrink-0 gap-[3px] border-b border-[#bdbdbd]">
      <span className={cell + " w-[148px]"} />
      <span className={cell + " w-[77px]"}><span><Cell t="层高:4.5m" /></span></span>
      <span className={cell + " w-[97px]"}><span><Cell t="底标高:4.45m" /></span></span>
      <span className={cell + " w-[47px]"}><Cell t="0" /></span>
      <span className={cell + " flex-1"}>名称在当前层当前构件类型下不允许重名</span>
      <span className={cell + " w-[69px]"}><span><Cell t="64.8 FPS" /></span></span>
    </div>
  );
}

const APPS: React.ReactNode[] = [
  <g key="edge"><path d="M2 14C3 4 9 1 13 1c6 0 10 5 10 10v3H9c0 4 7 5 12 2v4c-6 4-16 3-16-6 0-3 2-5 4-6-3 0-5 2-7 6zM9 10h8c0-5-7-5-8 0z" fill="#1b80dc" /></g>,
  <g key="ie"><path d="M12 3c5 0 9 4 9 10H9c1 5 7 4 8 2h4c-3 9-17 8-17-2 0-6 4-10 8-10zM9 10h7c-1-4-6-4-7 0z" fill="#58b4f0" /><path d="M2 22C0 17 8 6 16 3c6-3 8 0 6 4 0-3-3-3-8 0C7 11 3 18 5 21c1 1 3 1 5-1-3 3-7 4-8 2z" fill="#f3c23c" /></g>,
  <g key="folder"><path d="M1 3h7l2 2h13v16H1z" fill="#f8d775" /><path d="M1 8h22v3H1z" fill="#fbe7a6" /><path d="M5 13h14v8h-4v-4H9v4H5z" fill="#35a0e0" /></g>,
  <g key="360"><circle cx="12" cy="12" r="11" fill="#e9f7e2" /><circle cx="12" cy="12" r="9.500" fill="#4cb32a" /><path d="M12 6c4 0 6 3 6 7H9.500c.5 3 5 3 6 1H18c-2 6-12 5-12-1.500C6 9 9 6 12 6zM9.500 11h5c0-3-5-3-5 0z" fill="#fff" /><path d="M2 17C7 6 16 1 22 1c-6 2-12 7-16 14z" fill="#a6e04a" /></g>,
  <g key="mail"><path d="M0 9l12-7 12 7v13H0z" fill="#fff" /><path d="M0 10h22l-10 5 3 5-6-5z" fill="#06181c" /></g>,
  <g key="g"><path d="M14 2c4 1 7 0 10-1-1 4-3 6-7 5-6-1-9 2-9 6 0 5 8 6 9 1h-5v-3h10c0 17-20 17-21 3C0 6 7 1 14 2z" fill="#27a4e8" /></g>,
  <g key="gld"><rect width="24" height="24" rx="3" fill="#0a8ff0" /><path d="M12 4v16M5 12h14M5 12c0 5 6 5 7 2M19 12c0-5-6-4-7-1M9 19h6" stroke="#fff" strokeWidth="2" fill="none" /></g>,
];

function Taskbar() {
  const ic = "h-6 w-6";
  return (
    <footer className="flex h-10 shrink-0 items-center bg-[#06181c] text-white">
      <button aria-label="开始" className="flex h-full w-[48px] shrink-0 items-center justify-center bg-[#0a0c0e]">
        <svg viewBox="0 0 16 16" className="h-4 w-4"><path d="M0 2.300L7 1.300v6.200H0zM8 1.200L16 0v7.500H8zM0 8.500h7v6.200L0 13.700zM8 8.500h8V16l-8-1.200z" fill="#fff" /></svg>
      </button>
      <div className="flex h-full w-[344px] shrink-0 items-center bg-[#f2f2f2]">
        <svg viewBox="0 0 24 24" className="mr-2 ml-2 h-6 w-6"><circle cx="12" cy="12" r="9" fill="none" stroke="#111" strokeWidth="3" /></svg>
        <input aria-label="搜索" placeholder="在这里输入你要搜索的内容" className="w-[270px] bg-transparent text-sm text-[#444] outline-none placeholder:text-[#3c3c3c]" />
        <svg viewBox="0 0 16 18" className="h-[18px] w-4"><rect x="5.500" y="1" width="5" height="10" rx="1.500" fill="none" stroke="#333" strokeWidth="1.200" /><path d="M3.500 9v4.500h9V9M8 14v3M5 17h6" fill="none" stroke="#333" strokeWidth="1.200" /></svg>
      </div>
      <div className="flex shrink-0 items-center">
        <span className="flex w-[51px] justify-center pr-[2px]"><svg viewBox="0 0 18 18" className="h-[18px] w-[18px]"><path d="M2 2v2.500h10V2M2.500 6.500h9v6h-9zM2 17v-2.500h10V17M15.500 1v4M15.500 9v8M14.500 6.500h2" fill="none" stroke="#fff" strokeWidth="1.300" /></svg></span>
        <span className="flex w-[51px] justify-center pr-[2px]"><svg viewBox="0 0 24 24" className={ic}><path d="M11.500 11.500H6a5 5 0 115.500-5zM12.500 11.500V6a5 5 0 115 5.500zM12.500 12.500H18a5 5 0 11-5.500 5zM11.500 12.500V18a5 5 0 11-5-5.500z" fill="#e6eaea" /><path d="M4 12c5 2 6-3 8 0s4 2 8 0M12 3c-2 5 2 6 0 9s-1 5 0 8" stroke="#06181c" fill="none" /></svg></span>
        <span className="flex w-[51px] justify-center"><svg viewBox="0 0 24 24" className={ic}><path d="M12 3c6 0 9 4 9 10H8c0 5 8 6 9 2h4C18 25 3 23 3 12.500 3 7 7 3 12 3zM8 10h8c0-5-8-5-8 0z" fill="#f0f0f0" /><path d="M3 23C-1 17 8 4 18 1c4-1 5 1 4 4" stroke="#f0f0f0" fill="none" /></svg></span>
        <span className="flex w-[51px] justify-center"><svg viewBox="0 0 24 24" className={ic}><path d="M20 13c0 10-17 11-18 0C2 4 13 2 16 9c2 6-3 10-7 8s-4-7 0-8 6 3 3 5M18 18c-4 5-12 4-14-2M5 8c4-5 10-4 12 0" fill="none" stroke="#cfd5d6" strokeWidth="1.300" /><path d="M18 0c3 0 4 3 4 6l2 4H12l2-4c0-3 1-6 4-6zM16.500 11h3v2h-3z" fill="#f2b51c" /></svg></span>
      </div>
      <div className="flex h-full shrink-0 items-center pl-[1px]">
        {APPS.map((a, i) => (
          <span
            key={i}
            className={
              "flex h-full w-[41px] items-center justify-center border-b-2 " +
              (i === 6 ? "border-[#76b9ed] bg-[#3c4b4e]" : i === 3 || i === 5 ? "border-[#76b9ed]" : "border-transparent")
            }
          >
            <svg viewBox="0 0 24 24" className={i === 6 ? "h-6 w-6" : "h-[22px] w-[22px]"}>{a}</svg>
          </span>
        ))}
      </div>
      <span className="ml-[14px] shrink-0 text-[#ddd]">链接</span>
      <svg viewBox="0 0 18 18" className="ml-6 h-4 w-4 shrink-0"><g fill="none" stroke="#fff" strokeWidth="1.300"><circle cx="6" cy="8" r="3" /><path d="M1 17c0-8 10-8 10 0" /><circle cx="12" cy="4" r="3" /><path d="M10.500 8c4-2 7 1 7 5" /></g></svg>
      <div className="ml-auto flex h-full shrink-0 items-center">
        <div className="mr-[19px] text-center leading-[17px]"><p>29%</p><p>CPU使用</p></div>
        <svg viewBox="0 0 12 8" className="h-2 w-3"><path d="M1 7l5-5 5 5" stroke="#fff" fill="none" /></svg>
        <svg viewBox="0 0 18 14" className="ml-[10px] h-[14px] w-[18px]"><path d="M5.500 4.500h10v7h-10zM16 6.500h1v3h-1" stroke="#fff" fill="none" /><path d="M7 6h7v4H7z" fill="#fff" /><path d="M2 1v3M5 1v3M1 4h5v2L4 7v5H2" stroke="#fff" fill="none" /></svg>
        <svg viewBox="0 0 16 16" className="ml-2 h-4 w-4"><path d="M1 14C1 6 7 2 14 2M4 14c0-6 4-9 10-9M7 14c0-4 3-6 7-6M10 14c0-2 2-3 4-3" stroke="#ddd" fill="none" /><circle cx="13" cy="14" r="1.500" fill="#fff" /></svg>
        <svg viewBox="0 0 16 16" className="ml-[6px] h-4 w-4"><path d="M1 5.500h3L7.500 2v12L4 10.500H1z" stroke="#fff" fill="none" /><path d="M10 6l4 4M14 6l-4 4" stroke="#fff" /></svg>
        <svg viewBox="0 0 24 14" className="ml-[10px] h-[14px] w-6"><path d="M.5.500h22v12H.500z" stroke="#fff" fill="none" /><path d="M3 3.500h17M4 6.500h16" stroke="#fff" strokeDasharray="1.500 1.500" /><path d="M5 9.500h12" stroke="#fff" strokeDasharray="2 1 8 1" /></svg>
        <span className="ml-[9px]">中</span>
        <svg viewBox="0 0 28 28" className="ml-4 h-4 w-4"><path d="M1 4L23 1l4 21-22 5z" fill="#f4511e" /><path d="M21 8c-6-2-13-1-13 2s12 3 12 7-9 5-13 3" stroke="#fff" strokeWidth="4" fill="none" /></svg>
        <div className="ml-4 text-center leading-[19px]"><p>8:51</p><p>2018/9/24</p></div>
        <svg viewBox="0 0 16 16" className="mr-5 ml-[18px] h-4 w-4"><path d="M.5 1.500h15v11H9L7 15l-1.500-2.500h-5z" stroke="#fff" fill="none" strokeWidth="1.200" /></svg>
        <span className="mr-[3px] h-full w-px bg-[#4a5456]" />
      </div>
    </footer>
  );
}

export default function App() {
  return (
    <div className={"relative flex h-screen w-full flex-col overflow-hidden bg-[#f0f0f0] text-xs text-black " + UI}>
      <TitleBar />
      <MenuBar />
      <MainToolbar />
      <main className="flex min-h-0 flex-1 pt-[2px] pb-[2px]">
        <NavPanel />
        <div className="ml-[6px] flex min-w-0 flex-1 flex-col">
          <ComponentToolbar />
          <div className="flex min-h-0 flex-1">
            <ComponentList />
            <PropertyPanel />
          </div>
        </div>
      </main>
      <StatusBar />
      <Taskbar />
      <SectionEditor />
      <ImeBar />
    </div>
  );
}
